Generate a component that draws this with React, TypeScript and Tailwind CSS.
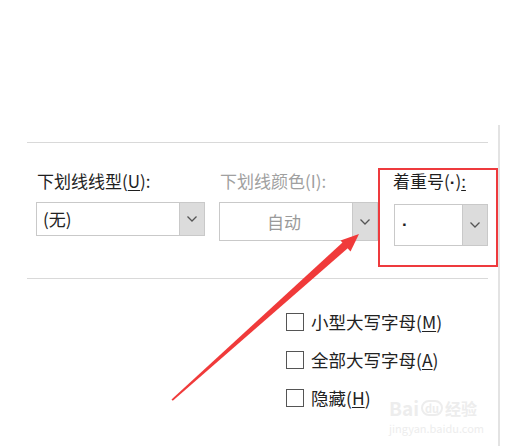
import React from "react";

const Chevron = () => (
  <svg width="12" height="8" viewBox="0 0 12 8">
    <polyline points="1.5,1.5 6,6 10.5,1.5" fill="none" stroke="#555" strokeWidth="1.3" />
  </svg>
);

const Dropdown = ({
  width,
  height,
  children,
  center,
}: {
  width: string;
  height: string;
  children?: React.ReactNode;
  center?: boolean;
}) => (
  <div className={`flex border-[1.5px] border-[#c9c9c9] bg-white ${width} ${height}`}>
    <div className={`flex flex-1 items-center ${center ? "justify-center" : "pl-[6px]"}`}>
      {children}
    </div>
    <div className="flex w-[25px] items-center justify-center border-l-[1.5px] border-[#c9c9c9] bg-[#dcdcdc]">
      <Chevron />
    </div>
  </div>
);

const Check = ({ label, hot }: { label: string; hot: string }) => (
  <div className="flex h-[38px] items-center gap-[7px]">
    <div className="h-[18px] w-[18px] border-[1.5px] border-[#555]" />
    <span className="text-[17.5px] leading-[22px] text-[#222]">
      {label}(<span className="underline underline-offset-2">{hot}</span>)
    </span>
  </div>
);

export default function App() {
  return (
    <div className="relative h-[446px] w-[509px] overflow-hidden bg-white font-['Noto_Sans_CJK_SC','Liberation_Sans',sans-serif]">
      <div className="mt-[125px] h-[321px] w-[500px] border-r-2 border-[#e3e3e3] pt-[17px]">
        <div className="ml-[27px] w-[461px] border-t border-[#d9d9d9]" />

        <div className="mt-[25px] flex items-start pl-[36px]">
          <div className="w-[169px] pt-[2px]">
            <div className="pl-[1px] text-[17px] leading-[22px] text-[#1e1e1e]">
              下划线线型(<span className="underline underline-offset-2">U</span>):
            </div>
            <div className="mt-[10px]">
              <Dropdown width="w-[169px]" height="h-[34px]">
                <span className="text-[17px] text-[#222]">(无)</span>
              </Dropdown>
            </div>
          </div>

          <div className="ml-[14px] w-[159px] pt-[2px]">
            <div className="pl-[1px] text-[17px] leading-[22px] text-[#a0a0a0]">下划线颜色(I):</div>
            <div className="mt-[10px]">
              <Dropdown width="w-[159px]" height="h-[39px]" center>
                <span className="pr-[4px] text-[17px] text-[#9a9a9a]">自动</span>
              </Dropdown>
            </div>
          </div>

          <div className="h-[99px] w-[120px] border-2 border-[#ee3a3d] pl-[13px]">
            <div className="text-[17px] leading-[22px] text-[#1e1e1e]">
              着重号(<span className="font-['Liberation_Sans',sans-serif] font-bold">·</span>)
              <span className="underline underline-offset-2">:</span>
            </div>
            <div className="ml-[1px] mt-[10px]">
              <Dropdown width="w-[94px]" height="h-[42px]">
                <span className="pl-[1px] font-['Liberation_Sans',sans-serif] text-[17px] font-bold text-[#222]">·</span>
              </Dropdown>
            </div>
          </div>
        </div>

        <div className="ml-[27px] mt-[11px] w-[461px] border-t border-[#d9d9d9]" />

        <div className="mt-[24px] flex flex-col pl-[286px]">
          <Check label="小型大写字母" hot="M" />
          <Check label="全部大写字母" hot="A" />
          <Check label="隐藏" hot="H" />
        </div>
      </div>

      {/* watermark */}
      <div className="pointer-events-none absolute left-[389px] top-[398px] flex flex-col items-start text-[#ededed]">
        <div className="flex h-[20px] items-center gap-[2px] text-[19px] font-bold leading-[20px]">
          <span>Bai</span>
          <span className="rounded-full border-2 border-[#ededed] px-[2px] text-[11px] leading-[12px]">du</span>
          <span className="text-[16px]">经验</span>
        </div>
        <div className="mt-[4px] text-[11px] leading-[12px]">jingyan.baidu.com</div>
      </div>

      {/* annotation arrow */}
      <svg className="pointer-events-none absolute left-0 top-0" width="509" height="446">
        <polygon points="171.5,399.5 172.8,400.8 348.6,247.6 343.6,241.6" fill="#f03a3a" />
        <polygon points="359,234 350.5,251.5 340.5,240.5" fill="#f03a3a" />
      </svg>
    </div>
  );
}
